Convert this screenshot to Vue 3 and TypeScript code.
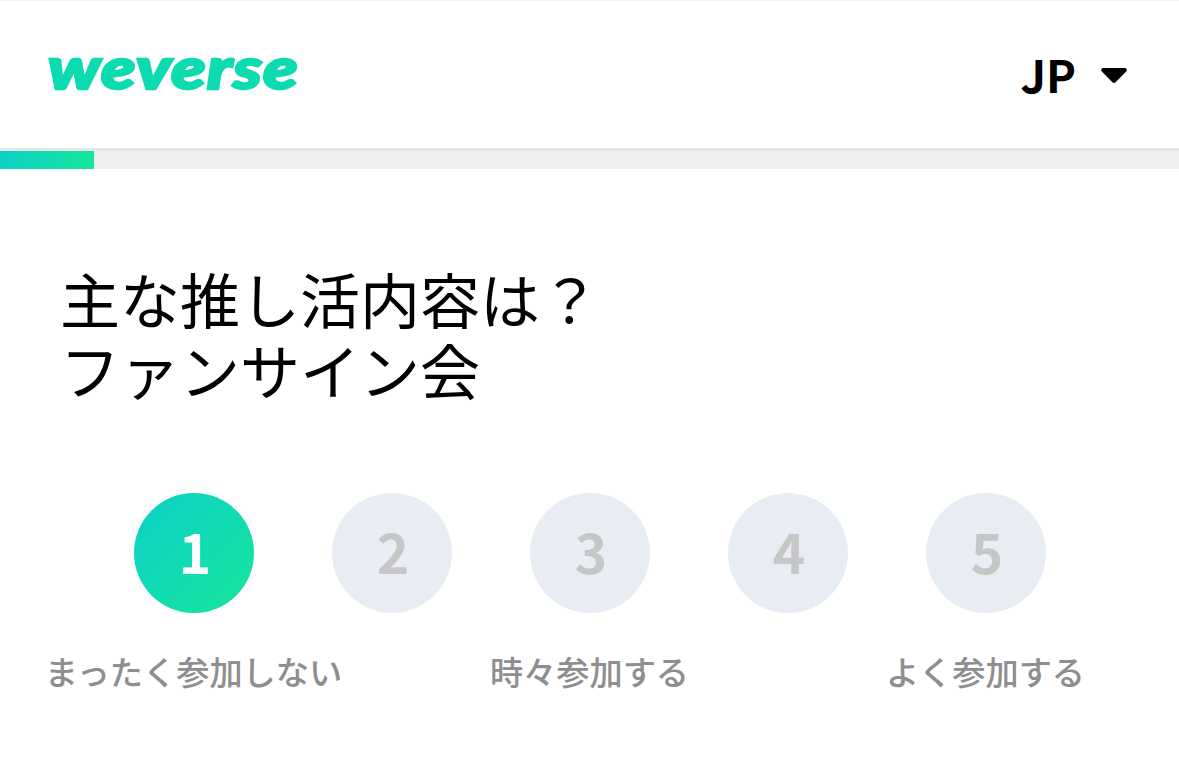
<script setup lang="ts">
const options = [
  { value: 1, label: 'まったく参加しない', active: true },
  { value: 2, label: '', active: false },
  { value: 3, label: '時々参加する', active: false },
  { value: 4, label: '', active: false },
  { value: 5, label: 'よく参加する', active: false },
]
</script>

<template>
  <div class="page">
    <header class="header">
      <span class="logo">weverse</span>
      <div class="lang">
        <span class="lang-text">JP</span>
        <svg class="caret" width="28" height="17" viewBox="0 0 28 17">
          <path d="M3.500 1h21c2 0 3 2.200 1.700 3.600L15.600 15.300c-.9.900-2.300.9-3.200 0L1.800 4.600C.5 3.200 1.500 1 3.500 1z" fill="#000" />
        </svg>
      </div>
    </header>
    <div class="progress"><div class="progress-fill" :style="{ width: '8%' }"></div></div>
    <main class="content">
      <h1 class="question">主な推し活内容は？<br />ファンサイン会</h1>
      <div class="scale">
        <div v-for="o in options" :key="o.value" class="option">
          <div class="circle" :class="{ active: o.active }">{{ o.value }}</div>
          <div class="label">{{ o.label }}</div>
        </div>
      </div>
    </main>
  </div>
</template>

<style>
html, body { margin: 0; background: #fff; }
</style>

<style scoped>
.page {
  width: 1179px;
  height: 779px;
  overflow: hidden;
  background: #fff;
  font-family: "Noto Sans CJK JP", "Noto Sans", sans-serif;
}
.header {
  box-sizing: border-box;
  height: 151px;
  border-top: 1px solid #f0f0f0;
  border-bottom: 3px solid #e6e6e6;
  padding: 0 51px 0 48px;
  display: flex;
  align-items: center;
  justify-content: space-between;
}
.logo {
  font-family: "Lato", sans-serif;
  font-style: italic;
  font-weight: 900;
  font-size: 58px;
  line-height: 1;
  letter-spacing: 1px;
  color: #0bdcb0;
  -webkit-text-stroke: 2.500px #0bdcb0;
  margin-top: -16px;
  transform: scaleX(1.215);
  transform-origin: left center;
}
.lang { display: flex; align-items: center; gap: 24px; margin-top: -3px; }
.lang-text {
  font-weight: 700;
  font-size: 45px;
  line-height: 1;
  color: #000;
}
.caret { display: block; margin-top: 4px; }
.progress { height: 18px; background: #efefef; }
.progress-fill {
  height: 100%;
  background: linear-gradient(90deg, #0bd0c4, #17e69b);
}
.content { padding-top: 93px; }
.question {
  margin: 0 0 0 60px;
  font-weight: 400;
  font-size: 60px;
  line-height: 71px;
  color: #000;
}
.scale {
  display: flex;
  justify-content: center;
  margin-top: 89px;
}
.option {
  width: 198px;
  display: flex;
  flex-direction: column;
  align-items: center;
}
.circle {
  box-sizing: border-box;
  width: 120px;
  height: 120px;
  padding: 0 0 6px 3px;
  border-radius: 50%;
  background: #e8edf3;
  color: #c6c6c6;
  font-weight: 700;
  font-size: 55px;
  display: flex;
  align-items: center;
  justify-content: center;
  line-height: 1;
}
.circle.active {
  background: linear-gradient(135deg, #0bd0c8, #17e69b);
  color: #fff;
}
.label {
  margin-top: 34px;
  height: 48px;
  line-height: 48px;
  font-size: 33.200px;
  font-weight: 500;
  color: #8e8e8e;
  white-space: nowrap;
}
</style>
